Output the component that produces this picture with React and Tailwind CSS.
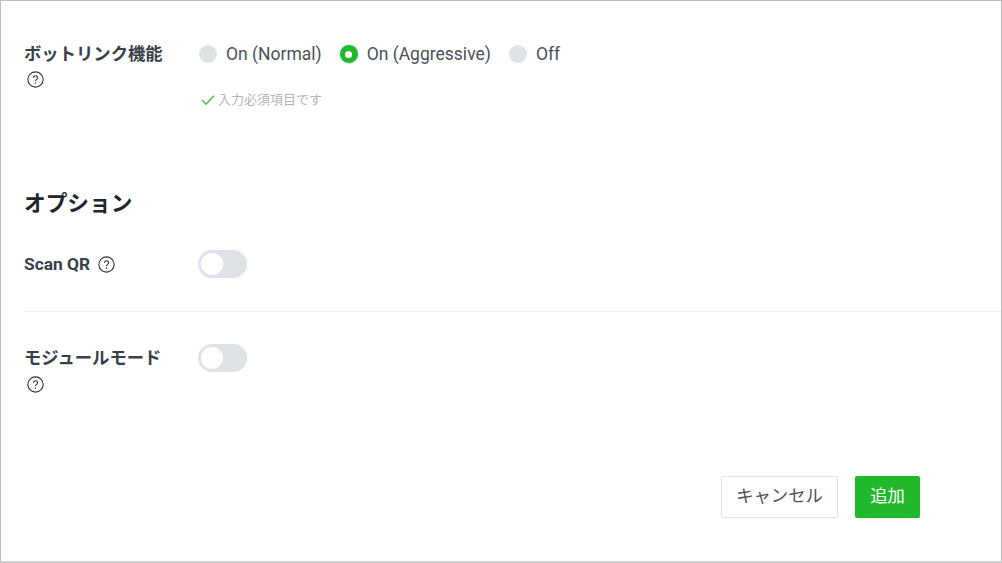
function HelpIcon() {
  return (
    <svg width="17" height="17" viewBox="0 0 16 16" fill="none" className="block shrink-0">
      <circle cx="8" cy="8" r="7.2" stroke="#2f353d" strokeWidth="1.05" />
      <path d="M6.1 6.4a1.9 1.9 0 1 1 3 1.5c-.7.5-1.1.8-1.1 1.6" stroke="#2f353d" strokeWidth="1.05" fill="none" />
      <circle cx="8" cy="11.4" r=".7" fill="#2f353d" />
    </svg>
  );
}

function Radio({ label, checked }) {
  return (
    <label className="flex items-center gap-[9px]">
      {checked ? (
        <span className="w-[20px] h-[20px] -mx-px rounded-full bg-[#22b82b] border border-[#e2e8f5] flex items-center justify-center">
          <span className="w-[7px] h-[7px] rounded-full bg-white"></span>
        </span>
      ) : (
        <span className="w-[18px] h-[18px] rounded-full bg-[#dfe2e7]"></span>
      )}
      <span className="text-[17.5px] leading-[26px] text-[#4a515b]">{label}</span>
    </label>
  );
}

function Toggle() {
  return (
    <span className="block w-[49px] h-[28px] -ml-px rounded-full bg-[#dfe2e7] p-[3px]">
      <span className="block w-[22px] h-[22px] rounded-full bg-white"></span>
    </span>
  );
}

export default function App() {
  return (
    <div className="w-[1002px] h-[563px] bg-white border border-[#bdbdbd] border-b-2 border-b-[#cfcfcf] overflow-hidden font-['Roboto','Noto_Sans_CJK_JP',sans-serif]">
      <div className="pl-[23px] pt-[40px]">
        {/* bot link */}
        <div className="flex">
          <div className="w-[175px] shrink-0">
            <div className="text-[17.33px] leading-[26px] font-bold text-[#39404a]">ボットリンク機能</div>
            <div className="mt-[4px] pl-[3px]"><HelpIcon /></div>
          </div>
          <div>
            <div className="flex items-center gap-[18px]">
              <Radio label="On (Normal)" />
              <Radio label="On (Aggressive)" checked />
              <Radio label="Off" />
            </div>
            <div className="mt-[23px] flex items-center gap-[3px] pl-[2px] text-[13px] leading-[20px] text-[#b0b5bc]">
              <svg width="14" height="14" viewBox="0 0 14 14" fill="none" className="block">
                <path d="M1 7l4 4.2L13 2.8" stroke="#3ebd44" strokeWidth="1.3" />
              </svg>
              入力必須項目です
            </div>
          </div>
        </div>

        {/* options */}
        <h2 className="mt-[78px] text-[21.67px] leading-[32px] font-bold text-[#20252b]">オプション</h2>

        <div className="mt-[30px] mb-[33px] flex items-center h-[28px]">
          <div className="w-[175px] shrink-0 flex items-center gap-[8px]">
            <span className="text-[17.33px] leading-[26px] font-bold text-[#39404a]">Scan QR</span>
            <HelpIcon />
          </div>
          <Toggle />
        </div>

        <div className="h-px bg-[#eceef1]"></div>

        <div className="mt-[32px] flex">
          <div className="w-[175px] shrink-0 pt-px">
            <div className="text-[17.33px] leading-[26px] font-bold text-[#39404a]">モジュールモード</div>
            <div className="mt-[5px] pl-[3px]"><HelpIcon /></div>
          </div>
          <Toggle />
        </div>

        <div className="mt-[83px] flex justify-end gap-[17px] pr-[81px]">
          <button className="w-[117px] h-[42px] rounded-[2px] bg-white border border-[#dfe2e7] text-[17.33px] text-[#4a515b]">キャンセル</button>
          <button className="w-[65px] h-[42px] rounded-[2px] bg-[#22b82b] text-[17.33px] text-white">追加</button>
        </div>
      </div>
    </div>
  );
}
